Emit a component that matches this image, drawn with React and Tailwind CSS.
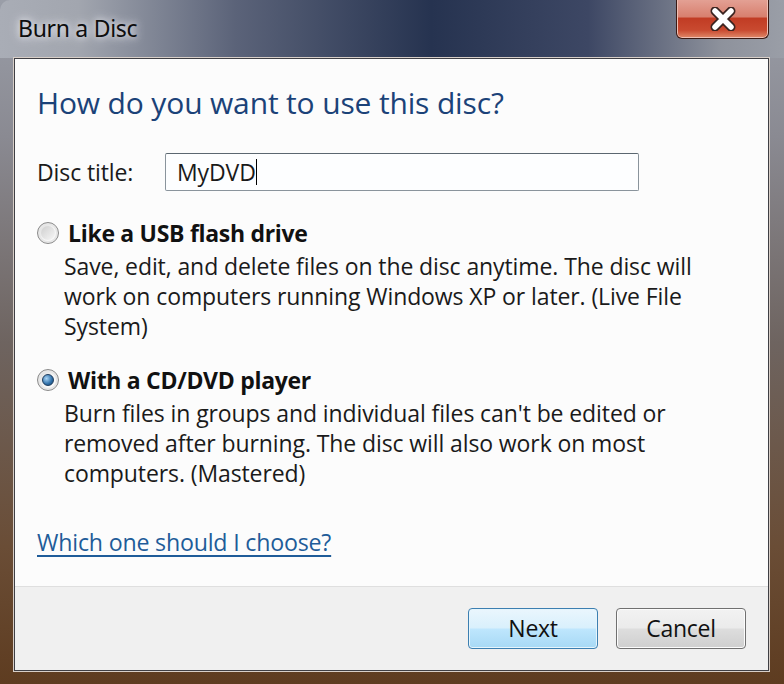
import React, { useState } from 'react';

const font = { fontFamily: '"Open Sans", "Noto Sans", sans-serif' };

const Radio = ({ checked, onClick }) => (
  <button
    type="button"
    onClick={onClick}
    className="w-[22px] h-[22px] rounded-full border border-[#8a8a8a] bg-gradient-to-br from-[#d8d8d8] via-[#f4f4f4] to-[#ffffff] flex items-center justify-center shrink-0 shadow-[inset_0_0_0_2px_#e6e6e6]"
  >
    {checked ? (
      <span className="w-[12px] h-[12px] rounded-full bg-[radial-gradient(circle_at_35%_35%,#a9d4f5,#2e6fa8_60%,#1b3f66)] border border-[#1d3c5e]"></span>
    ) : (
      <span className="w-[14px] h-[14px] rounded-full bg-gradient-to-br from-[#cfcfcf] to-[#f7f7f7]"></span>
    )}
  </button>
);

const Option = ({ label, lines, checked, onClick, className }) => (
  <div className={className}>
    <div className="flex items-center gap-[9px] h-[30px]">
      <Radio checked={checked} onClick={onClick} />
      <span className="text-[23px] font-bold text-[#111] tracking-[-0.3px] leading-[30px]">{label}</span>
    </div>
    <div className="pl-[27px] mt-[3px] text-[23px] leading-[30px] text-[#1a1a1a] tracking-[-0.1px]">
      {lines.map(l => (
        <div key={l} className="whitespace-nowrap">{l}</div>
      ))}
    </div>
  </div>
);

const App = () => {
  const [mode, setMode] = useState('cd');

  return (
    <div className="w-[784px] h-[684px] overflow-hidden bg-[linear-gradient(180deg,#9a9ea8_0%,#8a8a92_20%,#6e6460_50%,#6a4d36_80%,#5e3c20_100%)]" style={font}>
      <div className="h-full flex flex-col">
        {/* title bar */}
        <div className="h-[58px] flex items-start justify-between pl-[18px] pr-[15px] shrink-0 rounded-t-[10px] bg-[linear-gradient(90deg,#a9adb6_0%,#a2a6af_10%,#5b6379_30%,#263350_55%,#3d4764_75%,#8e929c_92%,#9a9ea7_100%)]">
          <span className="mt-[12px] text-[23px] leading-[32px] text-[#0e0e0e] tracking-[-0.3px] [text-shadow:0_0_12px_#e8e8ee,0_0_6px_#e8e8ee]" style={{ fontFamily: '"Noto Sans", sans-serif' }}>
            Burn a Disc
          </span>
          <button
            type="button"
            className="w-[93px] h-[40px] -mt-[1px] rounded-b-[6px] border border-[#3a1a14] border-t-0 bg-[linear-gradient(180deg,#e4a296_0%,#d8806f_45%,#c13c24_50%,#c94a30_80%,#e08a6a_100%)] shadow-[inset_0_0_0_1px_#f0c0b4] flex items-center justify-center"
          >
            <svg width="30" height="24" viewBox="0 0 30 24">
              <path d="M7 4 L23 20 M23 4 L7 20" stroke="#3b2420" strokeWidth="9" strokeLinecap="round" />
              <path d="M7 4 L23 20 M23 4 L7 20" stroke="#ffffff" strokeWidth="5.5" strokeLinecap="round" />
            </svg>
          </button>
        </div>

        {/* client area */}
        <div className="flex-1 ml-[14px] mr-[15px] mb-[13px] flex flex-col border border-[#3f3f44] shadow-[0_0_0_1px_#d8cfc8]">
          <div className="flex-1 bg-[#fcfcfc] pl-[22px] pr-[20px] pt-[22px]">
            <h1 className="text-[30px] leading-[44px] text-[#1b4278] tracking-[-0.15px]">How do you want to use this disc?</h1>

            <div className="flex items-center mt-[28px]">
              <label className="w-[128px] text-[23px] text-[#1a1a1a] tracking-[-0.1px]">Disc title:</label>
              <div className="w-[474px] h-[38px] border border-[#8a949c] border-t-[#5b6770] rounded-[2px] bg-[#fdfeff] flex items-center pl-[11px]">
                <span className="text-[23px] text-[#1a1a1a] tracking-[-0.1px] leading-[30px]">MyDVD</span>
                <span className="w-[1.5px] h-[26px] bg-black"></span>
              </div>
            </div>

            <Option
              className="mt-[27px]"
              label="Like a USB flash drive"
              checked={mode === 'usb'}
              onClick={() => setMode('usb')}
              lines={[
                'Save, edit, and delete files on the disc anytime. The disc will',
                'work on computers running Windows XP or later. (Live File',
                'System)',
              ]}
            />

            <Option
              className="mt-[24px]"
              label="With a CD/DVD player"
              checked={mode === 'cd'}
              onClick={() => setMode('cd')}
              lines={[
                "Burn files in groups and individual files can't be edited or",
                'removed after burning. The disc will also work on most',
                'computers. (Mastered)',
              ]}
            />

            <a href="#" className="inline-block mt-[39px] text-[23.2px] leading-[30px] text-[#1f5c99] underline underline-offset-[4px] tracking-[-0.2px]">
              Which one should I choose?
            </a>
          </div>

          <div className="h-[84px] shrink-0 bg-[#f0f0f0] border-t border-[#dfdfdf] flex items-center justify-end gap-[18px] pr-[22px]">
            <button type="button" className="w-[130px] h-[41px] rounded-[4px] border border-[#3c7fb1] bg-[linear-gradient(180deg,#eaf6fd_0%,#d9f0fc_48%,#bee6fd_52%,#a7d9f5_100%)] shadow-[inset_0_0_0_1px_#e6f5fc] text-[23px] text-[#111] tracking-[-0.3px]">
              Next
            </button>
            <button type="button" className="w-[130px] h-[41px] rounded-[4px] border border-[#707070] bg-[linear-gradient(180deg,#f2f2f2_0%,#ebebeb_48%,#dddddd_52%,#cfcfcf_100%)] shadow-[inset_0_0_0_1px_#fcfcfc] text-[23px] text-[#111] tracking-[-0.3px]">
              Cancel
            </button>
          </div>
        </div>
      </div>
    </div>
  );
};

export default App;
